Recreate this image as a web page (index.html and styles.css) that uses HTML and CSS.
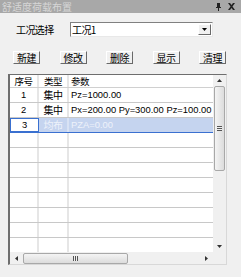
FILE: index.html
```
<!DOCTYPE html>
<html lang="zh">
<head>
    <meta charset="UTF-8">
    <title>舒适度荷载布置</title>
    <link rel="stylesheet" href="styles.css">
</head>
<body>
    <!-- Title bar -->
    <div class="titlebar">
        <span class="title">舒适度荷载布置</span>
        <span class="title-icons">
            <svg width="7" height="8" viewBox="0 0 7 8"><path d="M2 0h3v4h1v1H4v3H3V5H1V4h1z" fill="#222"/></svg>
            <svg width="7" height="7" viewBox="0 0 7 7"><path d="M0 0h2l1.5 2L5 0h2L4.5 3.5 7 7H5L3.5 5 2 7H0l2.5-3.5z" fill="#222"/></svg>
        </span>
    </div>

    <div class="content">
        <!-- Load case selection -->
        <div class="combo-row">
            <span class="combo-label">工况选择</span>
            <div class="combo">
                <span class="combo-text">工况1</span>
                <span class="combo-btn"><svg width="5" height="3" viewBox="0 0 5 3"><path d="M0 0h5L2.5 3z" fill="#000"/></svg></span>
            </div>
        </div>

        <!-- Action buttons -->
        <div class="btn-row">
            <button class="btn">新建</button>
            <button class="btn">修改</button>
            <button class="btn">删除</button>
            <button class="btn">显示</button>
            <button class="btn">清理</button>
        </div>

        <!-- Load grid -->
        <div class="grid-box">
            <div class="grid-main">
                <div class="rows">
                    <div class="row header">
                        <div class="cell c1 center">序号</div>
                        <div class="cell c2 center">类型</div>
                        <div class="cell c3">参数</div>
                    </div>
                    <div class="row">
                        <div class="cell c1 center">1</div>
                        <div class="cell c2 center cjk">集中</div>
                        <div class="cell c3">Pz=1000.00</div>
                    </div>
                    <div class="row">
                        <div class="cell c1 center">2</div>
                        <div class="cell c2 center cjk">集中</div>
                        <div class="cell c3">Px=200.00 Py=300.00 Pz=100.00</div>
                    </div>
                    <div class="row selected">
                        <div class="cell c1 center focus">3</div>
                        <div class="cell c2 center cjk">均布</div>
                        <div class="cell c3">PZA=0.00</div>
                    </div>
                    <div class="row"><div class="cell c1"></div><div class="cell c2"></div><div class="cell c3"></div></div>
                    <div class="row"><div class="cell c1"></div><div class="cell c2"></div><div class="cell c3"></div></div>
                    <div class="row"><div class="cell c1"></div><div class="cell c2"></div><div class="cell c3"></div></div>
                    <div class="row"><div class="cell c1"></div><div class="cell c2"></div><div class="cell c3"></div></div>
                    <div class="row"><div class="cell c1"></div><div class="cell c2"></div><div class="cell c3"></div></div>
                    <div class="row"><div class="cell c1"></div><div class="cell c2"></div><div class="cell c3"></div></div>
                    <div class="row"><div class="cell c1"></div><div class="cell c2"></div><div class="cell c3"></div></div>
                    <div class="row last"><div class="cell c1"></div><div class="cell c2"></div><div class="cell c3"></div></div>
                </div>
                <div class="vscroll">
                    <span class="arrow"><svg width="5" height="3" viewBox="0 0 5 3"><path d="M0 3h5L2.5 0z" fill="#333"/></svg></span>
                    <div class="vthumb"><span class="grip-h"></span></div>
                    <span class="vspace"></span>
                    <span class="arrow"><svg width="5" height="3" viewBox="0 0 5 3"><path d="M0 0h5L2.5 3z" fill="#333"/></svg></span>
                </div>
            </div>
            <div class="hscroll">
                <span class="arrow"><svg width="3" height="5" viewBox="0 0 3 5"><path d="M3 0v5L0 2.5z" fill="#333"/></svg></span>
                <div class="hthumb"><span class="grip-v"></span></div>
                <span class="hspace"></span>
                <span class="arrow"><svg width="3" height="5" viewBox="0 0 3 5"><path d="M0 0v5L3 2.5z" fill="#333"/></svg></span>
                <span class="corner"></span>
            </div>
        </div>
    </div>
</body>
</html>
```

FILE: styles.css
```
/* Page */
body {
    margin: 0;
    width: 241px;
    height: 277px;
    background-color: #f0f0f0;
    font-family: 'Liberation Sans', 'Noto Sans CJK SC', sans-serif;
    font-size: 10px;
    color: #000;
    overflow: hidden;
}

/* Title bar */
.titlebar {
    height: 13px;
    background-color: #a8a8a8;
    display: flex;
    align-items: center;
    justify-content: space-between;
    padding: 0 6px 0 2px;
}

.title {
    color: #d6d6d6;
    font-family: 'Noto Sans CJK SC', sans-serif;
    font-size: 10px;
    line-height: 13px;
}

.title-icons {
    display: flex;
    align-items: center;
    gap: 6px;
}

/* Panel content */
.content {
    padding: 9px 14px 0 8px;
}

/* Combo row */
.combo-row {
    display: flex;
    align-items: center;
    height: 15px;
}

.combo-label {
    flex: none;
    width: 62px;
    padding-left: 8px;
    box-sizing: border-box;
    font-family: 'Noto Sans CJK SC', sans-serif;
    font-size: 10px;
    letter-spacing: -0.6px;
}

.combo {
    flex: none;
    width: 143px;
    height: 15px;
    box-sizing: border-box;
    background-color: #fff;
    border-top: 1px solid #808080;
    border-left: 1px solid #808080;
    border-right: 1px solid #e8e8e8;
    border-bottom: 1px solid #e8e8e8;
    display: flex;
    align-items: center;
    justify-content: space-between;
    padding-left: 1px;
}

.combo-text {
    font-family: 'Noto Sans CJK SC', sans-serif;
    font-size: 10px;
    line-height: 13px;
    letter-spacing: -0.6px;
}

.combo-btn {
    width: 13px;
    height: 11px;
    margin-right: 1px;
    box-sizing: border-box;
    background-color: #f0f0f0;
    border-top: 1px solid #fff;
    border-left: 1px solid #fff;
    border-right: 1px solid #696969;
    border-bottom: 1px solid #696969;
    display: flex;
    align-items: center;
    justify-content: center;
}

/* Button row */
.btn-row {
    display: flex;
    justify-content: space-between;
    margin: 14px 0 0 5px;
    padding-right: 1px;
}

.btn {
    width: 27px;
    height: 13px;
    padding: 0;
    box-sizing: border-box;
    background-color: #f0f0f0;
    border-top: 1px solid #fff;
    border-left: 1px solid #fff;
    border-right: 1px solid #696969;
    border-bottom: 1px solid #696969;
    font-family: 'Noto Sans CJK SC', sans-serif;
    font-size: 10px;
    line-height: 11px;
    letter-spacing: -0.5px;
    color: #000;
}

/* Grid */
.grid-box {
    margin-top: 10px;
    width: 219px;
    height: 191px;
    box-sizing: border-box;
    border-top: 1px solid #6e6e6e;
    border-left: 2px solid #6e6e6e;
    border-right: 1px solid #d8d8d8;
    border-bottom: 1px solid #d8d8d8;
    background-color: #fff;
    display: flex;
    flex-direction: column;
}

.grid-main {
    display: flex;
    height: 177px;
    overflow: hidden;
}

.rows {
    width: 203px;
    overflow: hidden;
}

.row {
    display: flex;
    height: 15px;
    box-sizing: border-box;
    border-bottom: 1px solid #c8c8c8;
}

.row.header {
    height: 13px;
    border-bottom: 1px solid #d0d0d0;
}

.row.last {
    border-bottom: none;
}

.cell {
    box-sizing: border-box;
    height: 100%;
    font-size: 9.4px;
    line-height: 14px;
    white-space: nowrap;
    overflow: hidden;
    border-right: 2px solid #e6e6e6;
}

.cell.cjk {
    font-family: 'Noto Sans CJK SC', sans-serif;
    font-size: 10px;
    letter-spacing: -0.5px;
}

.header .cell {
    overflow: visible;
    line-height: 12px;
    padding-left: 2px;
    font-family: 'Noto Sans CJK SC', sans-serif;
    font-size: 9.5px;
    letter-spacing: -0.4px;
}

.c1 {
    width: 29px;
}

.c2 {
    width: 30px;
}

.c3 {
    flex: 1;
    padding-left: 2px;
    border-right: none;
}

.center {
    text-align: center;
}

.header .center {
    padding-left: 0;
}

/* Selected row */
.row.selected {
    background-color: #c5d4ef;
    color: #eef2fa;
    border-bottom: 1px solid #3a70d0;
}

.row.selected .cell {
    border-right-color: #d8e2f4;
}

.row.selected .cell.focus {
    background-color: #fff;
    color: #000;
    border: 1px solid #3a70d0;
    line-height: 12px;
}

/* Vertical scrollbar */
.vscroll {
    width: 13px;
    background-color: #f0f0f0;
    display: flex;
    flex-direction: column;
    align-items: center;
}

.vscroll .arrow {
    height: 11px;
    display: flex;
    align-items: center;
    justify-content: center;
}

.vthumb {
    width: 11px;
    height: 85px;
    box-sizing: border-box;
    border: 1px solid #a8a8a8;
    border-radius: 2px;
    background: linear-gradient(to right, #f4f4f4, #dcdcdc);
    display: flex;
    align-items: center;
    justify-content: center;
}

.grip-h {
    width: 5px;
    height: 5px;
    border-top: 1px solid #555;
    border-bottom: 1px solid #555;
    box-sizing: border-box;
    background: linear-gradient(#f0f0f0 40%, #555 40%, #555 60%, #f0f0f0 60%);
}

.vspace {
    flex: 1;
}

/* Horizontal scrollbar */
.hscroll {
    display: flex;
    align-items: center;
    height: 12px;
    background-color: #f0f0f0;
}

.hscroll .arrow {
    width: 13px;
    height: 12px;
    display: flex;
    align-items: center;
    justify-content: center;
}

.hthumb {
    width: 105px;
    height: 11px;
    box-sizing: border-box;
    border: 1px solid #a8a8a8;
    border-radius: 2px;
    background: linear-gradient(#f4f4f4, #dcdcdc);
    display: flex;
    align-items: center;
    justify-content: center;
}

.grip-v {
    width: 5px;
    height: 5px;
    border-left: 1px solid #555;
    border-right: 1px solid #555;
    box-sizing: border-box;
    background: linear-gradient(to right, #f0f0f0 40%, #555 40%, #555 60%, #f0f0f0 60%);
}

.hspace {
    flex: 1;
}

.corner {
    width: 13px;
    height: 12px;
    background-color: #f0f0f0;
}
```
